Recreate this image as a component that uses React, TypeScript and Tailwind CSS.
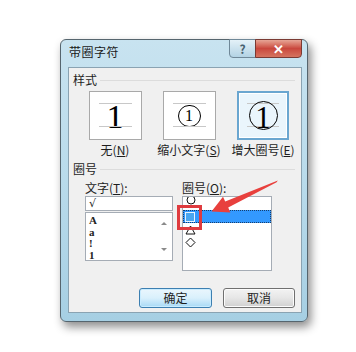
import React from 'react';

const font = "font-['Noto_Sans_CJK_SC','Noto_Sans',sans-serif]";

function Key({ text, k }: { text: string; k: string }) {
   return (
      <span>
         {text}(<span className="underline">{k}</span>)
      </span>
   );
}

function GroupLabel({ children }: { children: React.ReactNode }) {
   return (
      <div className="flex h-[12px] items-center gap-[3px] pl-[4px] pr-[6px] text-[12px] leading-[12px] text-[#1e1e1e]">
         <span>{children}</span>
         <div className="h-px flex-1 bg-[#dcdcdc]" />
      </div>
   );
}

function Guides({ children }: { children: React.ReactNode }) {
   return (
      <div className="relative flex h-full w-full items-center justify-center">
         <div className="absolute left-[9px] right-[9px] top-[11px] h-px bg-[#c8c8c8]" />
         <div className="absolute left-[9px] right-[9px] top-[34px] h-px bg-[#c8c8c8]" />
         {children}
      </div>
   );
}

function StyleBox({ selected, children }: { selected?: boolean; children: React.ReactNode }) {
   return (
      <div
         className={
            selected
               ? 'h-[49px] w-[52px] border-2 border-[#6aa6d0] bg-[#eaf5fc] shadow-[inset_0_0_0_1px_#ffffff]'
               : 'h-[49px] w-[53px] border border-[#a9a9a9] bg-white'
         }
      >
         {children}
      </div>
   );
}

export default function App() {
   return (
      <div className={`relative min-h-[352px] w-[356px] bg-white pl-[60px] pt-[39px] ${font}`}>
         <div className="flex h-[283px] w-[248px] flex-col rounded-[6px] border border-[#56656e] bg-gradient-to-b from-[#c8e3f0] via-[#b9dbeb] to-[#a6cfe3] pb-[8px] pl-[7px] pr-[5px] shadow-[3px_5px_10px_rgba(0,0,0,0.45)]">
            <div className="flex h-[27px] items-start justify-between">
               <span className="pl-[1px] pt-[6px] text-[12px] leading-[12px] tracking-[0.5px] text-[#1a1a1a]">带圈字符</span>
               <div className="-mt-px flex">
                  <div className="flex h-[19px] w-[27px] items-center justify-center rounded-bl-[4px] border border-[#6f8898] bg-gradient-to-b from-[#e4f1f8] to-[#b3d3e4] text-[12px] font-bold leading-none text-[#47606f]">
                     ?
                  </div>
                  <div className="-ml-px flex h-[19px] w-[47px] items-center justify-center rounded-br-[4px] border border-[#7a3a33] bg-gradient-to-b from-[#e6a596] via-[#c9473d] to-[#d5735f] text-[13px] font-bold leading-none text-white">
                     ✕
                  </div>
               </div>
            </div>

            <div className="flex flex-1 flex-col border border-[#8aa3b2] bg-[#f0f0f0] pt-[6px]">
               <GroupLabel>样式</GroupLabel>

               <div className="mt-[5px] grid grid-cols-[74px_74px_74px] pl-[9px]">
                  <div className="flex justify-center">
                     <StyleBox>
                        <Guides>
                           <span className="mt-[2px] font-['Liberation_Serif',serif] text-[34px] leading-none text-black">1</span>
                        </Guides>
                     </StyleBox>
                  </div>
                  <div className="flex justify-center">
                     <StyleBox>
                        <Guides>
                           <div className="flex h-[22px] w-[23px] items-center justify-center rounded-full border-[1.5px] border-black font-['Liberation_Serif',serif] text-[16px] leading-none text-black">
                              1
                           </div>
                        </Guides>
                     </StyleBox>
                  </div>
                  <div className="flex justify-center">
                     <StyleBox selected>
                        <div className="relative flex h-full w-full items-center justify-center">
                           <div className="absolute left-[8px] right-[8px] top-[10px] h-px bg-[#c8c8c8]" />
                           <div className="absolute left-[8px] right-[8px] top-[33px] h-px bg-[#c8c8c8]" />
                           <div className="relative flex h-[29px] w-[29px] items-center justify-center rounded-full border-[1.5px] border-black font-['Liberation_Serif',serif] text-[31px] leading-none text-black">
                              <span className="mt-[3px]">1</span>
                           </div>
                        </div>
                     </StyleBox>
                  </div>
               </div>

               <div className="mt-[4px] grid grid-cols-[74px_74px_74px] pl-[9px] text-[12px] leading-[12px] text-[#1e1e1e]">
                  <div className="flex justify-center whitespace-nowrap">
                     <Key text="无" k="N" />
                  </div>
                  <div className="flex justify-center whitespace-nowrap">
                     <Key text="缩小文字" k="S" />
                  </div>
                  <div className="flex justify-center whitespace-nowrap">
                     <Key text="增大圈号" k="E" />
                  </div>
               </div>

               <div className="mt-[7px]">
                  <GroupLabel>圈号</GroupLabel>
               </div>

               <div className="mt-[7px] flex pl-[16px] text-[12px] leading-[12px] text-[#1e1e1e]">
                  <div className="flex w-[88px] flex-col">
                     <span>
                        文字(<span className="underline">T</span>):
                     </span>
                     <div className="mt-[2px] flex h-[15px] items-center border border-[#a5acb5] bg-white pl-[3px] font-['DejaVu_Sans',sans-serif] text-[11px] italic leading-none">
                        √
                     </div>
                     <div className="mt-[1px] flex h-[49px] border border-[#a5acb5] bg-white">
                        <div className="flex flex-1 flex-col pl-[3px] pt-[2px] font-['Liberation_Serif',serif] text-[11px] font-semibold leading-[11.5px] text-[#222]">
                           <span>A</span>
                           <span>a</span>
                           <span>!</span>
                           <span>1</span>
                        </div>
                        <div className="flex w-[14px] flex-col items-center justify-between py-[9px] pr-[2px]">
                           <div className="h-0 w-0 border-x-[3px] border-b-[3px] border-x-transparent border-b-[#8a8a8a]" />
                           <div className="h-0 w-0 border-x-[3px] border-t-[3px] border-x-transparent border-t-[#8a8a8a]" />
                        </div>
                     </div>
                  </div>

                  <div className="ml-[9px] flex w-[90px] flex-col">
                     <span>
                        圈号(<span className="underline">O</span>):
                     </span>
                     <div className="mt-[2px] flex h-[75px] flex-col overflow-hidden border border-[#a5acb5] bg-white">
                        <div className="-mt-[4px] flex h-[13px] shrink-0 items-center pl-[3px]">
                           <svg width="10" height="10" viewBox="0 0 10 10">
                              <circle cx="5" cy="5" r="4" fill="none" stroke="#111" strokeWidth="1" />
                           </svg>
                        </div>
                        <div className="mt-[4px] flex h-[13px] shrink-0 items-center border border-dotted border-[#143e6e] bg-[#3399ff] pl-[1px]">
                           <div className="h-[10px] w-[10px] border border-[#e8f4ff] bg-[#4aa6f0]" />
                        </div>
                        <div className="flex h-[13px] shrink-0 items-center pl-[2px]">
                           <svg width="11" height="10" viewBox="0 0 11 10">
                              <path d="M5.5 1 L10 9 L1 9 Z" fill="none" stroke="#111" strokeWidth="1" />
                           </svg>
                        </div>
                        <div className="flex h-[13px] shrink-0 items-center pl-[2px]">
                           <svg width="11" height="11" viewBox="0 0 11 11">
                              <path d="M5.5 1 L10 5.5 L5.5 10 L1 5.5 Z" fill="none" stroke="#111" strokeWidth="1" />
                           </svg>
                        </div>
                     </div>
                  </div>
               </div>

               <div className="mt-[17px] flex gap-[11px] pl-[70px] text-[12px] leading-none text-[#1e1e1e]">
                  <div className="flex h-[20px] w-[73px] items-center justify-center rounded-[3px] border border-[#3c7fb1] bg-gradient-to-b from-[#eaf6fd] via-[#d9f0fc] to-[#a7d9f5] shadow-[inset_0_0_0_1px_#c9ecff]">
                     确定
                  </div>
                  <div className="flex h-[20px] w-[72px] items-center justify-center rounded-[3px] border border-[#707070] bg-gradient-to-b from-[#f3f3f3] via-[#e6e6e6] to-[#d0d0d0] shadow-[inset_0_0_0_1px_#fcfcfc]">
                     取消
                  </div>
               </div>
            </div>
         </div>

         <svg className="pointer-events-none absolute left-0 top-0" width="356" height="352" viewBox="0 0 356 352">
            <rect x="178.5" y="206.5" width="22" height="22" fill="none" stroke="#df3b3f" strokeWidth="3" />
            <path
               d="M277.8 180.4 L276.6 182.2 L228.2 207.6 L230.4 212.4 L211.5 211.5 L223 196.8 L225.2 201.6 Z"
               fill="#e8403d"
            />
         </svg>
      </div>
   );
}
